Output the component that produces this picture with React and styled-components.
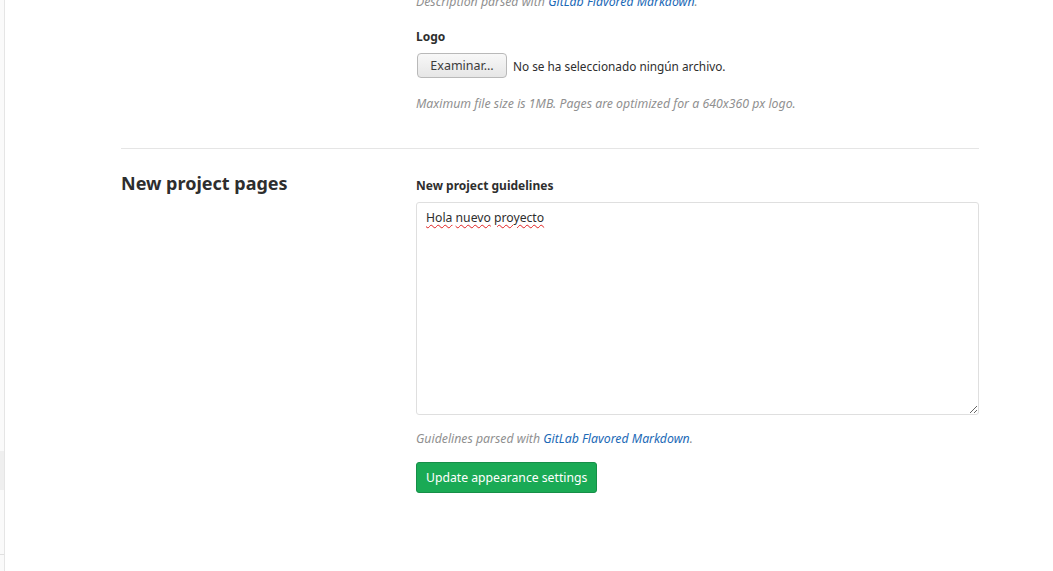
import React from "react";
import styled, { createGlobalStyle } from "styled-components";

const GlobalStyle = createGlobalStyle`
  html, body {
    margin: 0;
    padding: 0;
    background: #ffffff;
    overflow: hidden;
  }
  body {
    font-family: "Noto Sans", "DejaVu Sans", sans-serif;
    color: #2e2e2e;
    font-size: 13px;
  }
`;

function App() {
  return (
    <>
      <GlobalStyle />
      <Page>
        <Sidebar>
          <SidebarBlock />
          <SidebarRule />
        </Sidebar>
        <Main>
          <Section>
            <SectionTitle />
            <Fields>
              <HelpText>
                Description parsed with <Link>GitLab Flavored Markdown</Link>.
              </HelpText>
              <Label $top={19}>Logo</Label>
              <FileRow>
                <BrowseButton>Examinar…</BrowseButton>
                <FileName>No se ha seleccionado ningún archivo.</FileName>
              </FileRow>
              <HelpText $top={17}>
                Maximum file size is 1MB. Pages are optimized for a 640x360 px
                logo.
              </HelpText>
            </Fields>
          </Section>
          <Divider />
          <Section $top={24}>
            <SectionTitle>New project pages</SectionTitle>
            <Fields>
              <Label $top={5}>New project guidelines</Label>
              <TextArea>
                <Misspelled>Hola</Misspelled>{" "}
                <Misspelled>nuevo</Misspelled>{" "}
                <Misspelled>proyecto</Misspelled>
              </TextArea>
              <HelpText $top={15}>
                Guidelines parsed with <Link>GitLab Flavored Markdown</Link>.
              </HelpText>
              <SubmitButton>Update appearance settings</SubmitButton>
            </Fields>
          </Section>
        </Main>
      </Page>
    </>
  );
}

export default App;

const Page = styled.div`
  display: flex;
  width: 1053px;
  height: 571px;
  overflow: hidden;
`;

const Sidebar = styled.div`
  position: relative;
  width: 4px;
  flex-shrink: 0;
  background-color: #fafafa;
  border-right: 1px solid #e5e5e5;
`;

const SidebarBlock = styled.div`
  position: absolute;
  top: 451px;
  left: 0;
  width: 4px;
  height: 39px;
  background-color: #efefef;
`;

const SidebarRule = styled.div`
  position: absolute;
  top: 554px;
  left: 0;
  width: 4px;
  height: 1px;
  background-color: #e0e0e0;
`;

const Main = styled.div`
  width: 858px;
  margin-left: 116px;
  margin-top: -7px;
`;

const Section = styled.div`
  display: grid;
  grid-template-columns: 295px 563px;
  margin-top: ${(p) => p.$top || 0}px;
`;

const SectionTitle = styled.h4`
  margin: 0;
  font-size: 18px;
  font-weight: 700;
  line-height: 20px;
  color: #2e2e2e;
`;

const Fields = styled.div`
  display: flex;
  flex-direction: column;
  align-items: flex-start;
`;

const Label = styled.label`
  font-size: 12px;
  font-weight: 700;
  line-height: 16px;
  margin-top: ${(p) => p.$top || 0}px;
  margin-bottom: 8px;
  color: #2e2e2e;
`;

const HelpText = styled.p`
  margin: ${(p) => p.$top || 0}px 0 0 0;
  font-size: 12.3px;
  line-height: 17px;
  font-style: italic;
  color: #909090;
`;

const Link = styled.a`
  color: #1b69b6;
  text-decoration: none;
`;

const FileRow = styled.div`
  display: flex;
  align-items: center;
  gap: 6px;
  padding-left: 1px;
`;

const BrowseButton = styled.button`
  height: 25px;
  width: 90px;
  padding: 0;
  font-family: inherit;
  font-size: 12.5px;
  color: #3c3c3c;
  border: 1px solid #b9b9b9;
  border-radius: 4px;
  background: linear-gradient(#f8f8f8, #e6e6e6);
`;

const FileName = styled.span`
  font-size: 11.8px;
  color: #2e2e2e;
`;

const Divider = styled.hr`
  margin: 36px 0 0 0;
  border: 0;
  border-top: 1px solid #e5e5e5;
`;

const TextArea = styled.div`
  box-sizing: border-box;
  width: 563px;
  height: 213px;
  padding: 6px 9px;
  border: 1px solid #dfdfdf;
  border-radius: 3px;
  font-size: 12.2px;
  line-height: 18px;
  color: #2e2e2e;
  resize: vertical;
  overflow: auto;
`;

const Misspelled = styled.span`
  text-decoration: underline wavy #e02020;
  text-decoration-thickness: 1px;
  text-underline-offset: 2px;
`;

const SubmitButton = styled.button`
  margin-top: 15px;
  height: 31px;
  padding: 0 9px;
  font-family: inherit;
  font-size: 12.2px;
  color: #ffffff;
  background-color: #1aaa55;
  border: 1px solid #168f48;
  border-radius: 3px;
`;
